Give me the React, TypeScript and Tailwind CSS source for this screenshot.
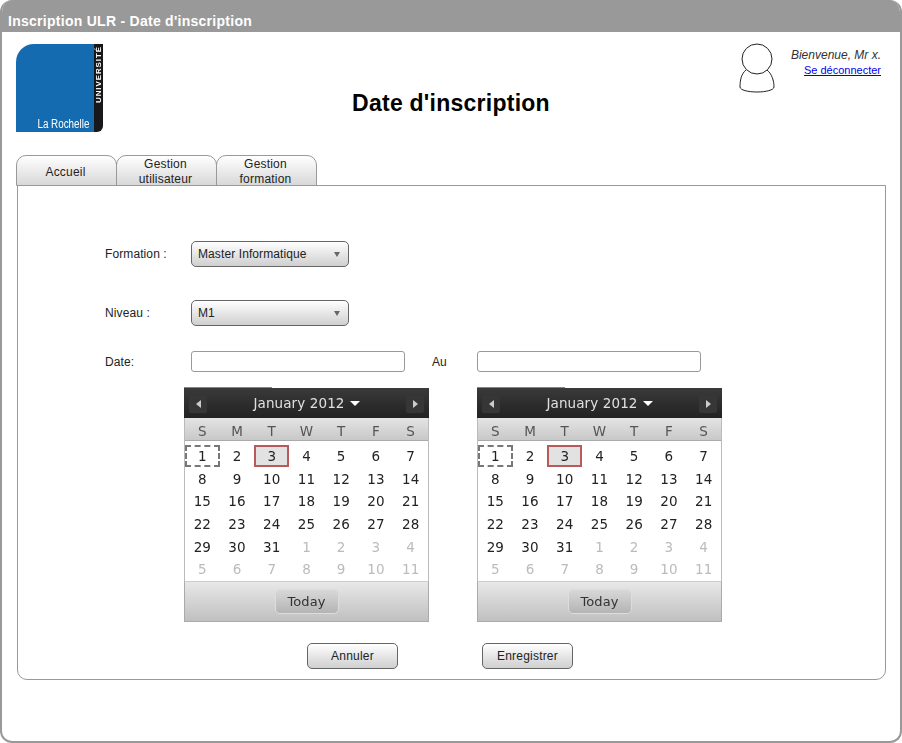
import { ReactNode } from 'react';

const weeks = [
  [1, 2, 3, 4, 5, 6, 7],
  [8, 9, 10, 11, 12, 13, 14],
  [15, 16, 17, 18, 19, 20, 21],
  [22, 23, 24, 25, 26, 27, 28],
  [29, 30, 31, 1, 2, 3, 4],
  [5, 6, 7, 8, 9, 10, 11],
];

function Tab({ children, wrap }: { children: ReactNode; wrap?: boolean }) {
  return (
    <div
      className={`w-[101px] -mr-px h-[31px] border border-[#999] rounded-t-[10px] bg-gradient-to-b from-white to-[#d8d8d8] flex justify-center text-center text-[12px] tracking-[0.2px] text-[#222] ${
        wrap ? 'leading-[15px] pt-px pr-[2px]' : 'items-center pt-[2px] pr-[2px]'
      }`}
    >
      <span>{children}</span>
    </div>
  );
}

function Select({ value }: { value: string }) {
  return (
    <div className="w-[158px] h-[26px] border border-[#666] rounded-[5px] bg-gradient-to-b from-white to-[#cfcfcf] flex items-center justify-between pl-[6px] pr-[8px] text-[12px] tracking-[0.1px] text-[#222]">
      <span>{value}</span>
      <span className="w-0 h-0 border-x-[3px] border-x-transparent border-t-[5px] border-t-[#666]" />
    </div>
  );
}

function Calendar() {
  return (
    <div className="w-[245px] blur-[0.35px] font-['DejaVu_Sans',sans-serif]">
      <div className="h-px w-[88px] bg-[#5b8fb5]" />
      <div className="h-[30px] bg-gradient-to-b from-[#3a3a3a] to-[#222] flex items-center justify-between px-[5px] pt-[1px] text-[#e0e0e0] text-[13.5px]">
        <span className="w-[18px] h-[18px] rounded-[2px] bg-[#363636] flex items-center justify-center">
          <span className="w-0 h-0 border-y-[4px] border-y-transparent border-r-[5px] border-r-[#ccc]" />
        </span>
        <span className="flex items-center gap-[5px]">
          January 2012
          <span className="w-0 h-0 border-x-[5px] border-x-transparent border-t-[5px] border-t-white" />
        </span>
        <span className="w-[18px] h-[18px] rounded-[2px] bg-[#363636] flex items-center justify-center">
          <span className="w-0 h-0 border-y-[4px] border-y-transparent border-l-[5px] border-l-[#ccc]" />
        </span>
      </div>
      <div className="border-x border-[#bbb]">
        <div className="h-[23px] pt-[3px] grid grid-cols-7 items-center text-center text-[13.5px] text-[#555] bg-gradient-to-b from-[#e4e4e4] to-[#c8c8c8] border-b border-[#aaa]">
          {['S', 'M', 'T', 'W', 'T', 'F', 'S'].map((d, i) => (
            <span key={i}>{d}</span>
          ))}
        </div>
        <div className="h-[140px] pt-[4px] bg-white text-[13.5px]">
          {weeks.map((week, w) => (
            <div key={w} className="grid grid-cols-7 h-[22.6px] items-center text-center">
              {week.map((day, i) => {
                const muted = (w === 4 && i > 2) || w === 5;
                return (
                  <span key={i} className="flex justify-center">
                    <span
                      className={`w-[35px] h-[22px] flex items-center justify-center ${
                        muted ? 'text-[#bbb]' : 'text-[#222]'
                      } ${w === 0 && i === 0 ? 'border-2 border-dashed border-[#777]' : ''} ${
                        w === 0 && i === 2 ? 'border-2 border-[#b85a5a] bg-[#e2e2e2]' : ''
                      }`}
                    >
                      {day}
                    </span>
                  </span>
                );
              })}
            </div>
          ))}
        </div>
      </div>
      <div className="h-[41px] border border-[#aaa] border-t-[#ccc] bg-gradient-to-b from-[#e8e8e8] to-[#c0c0c0] flex items-center justify-center">
        <div className="w-[64px] h-[25px] rounded-[5px] border border-[#ddd] bg-gradient-to-b from-[#d8d8d8] to-[#b4b4b4] flex items-center justify-center text-[13px] text-[#333]">
          Today
        </div>
      </div>
    </div>
  );
}

function Button({ children }: { children: ReactNode }) {
  return (
    <div className="w-[91px] h-[26px] border border-[#666] rounded-[5px] bg-gradient-to-b from-white to-[#cfcfcf] flex items-center justify-center text-[12px] tracking-[0.2px] text-[#222]">
      {children}
    </div>
  );
}

export default function App() {
  return (
    <div className="h-[743px] bg-white border-2 border-t-0 border-[#999] rounded-[12px] overflow-hidden font-['Liberation_Sans',Arial,sans-serif]">
      <div className="h-[32px] -mx-[2px] bg-[#999] flex items-center pl-[8px] pt-[9px] text-[14px] tracking-[0.27px] font-bold text-white leading-none">
        Inscription ULR - Date d'inscription
      </div>

      <div className="grid grid-cols-[1fr_auto_1fr] h-[123px] pl-[14px] pr-[19px] pt-[12px]">
        <div className="w-[87px] h-[88px] flex rounded-tl-[18px] rounded-br-[6px] overflow-hidden">
          <div className="w-[78px] bg-[#156bb0] flex items-end justify-end pr-[5px] pb-px">
            <span className="inline-block origin-right scale-x-[0.82] whitespace-nowrap text-[12px] leading-[14px] text-white">
              La Rochelle
            </span>
          </div>
          <div className="flex-1 bg-[#18181b] flex justify-center items-start pt-[2px]">
            <span className="[writing-mode:vertical-rl] rotate-180 text-[8px] tracking-[0.9px] leading-[9px] font-bold text-white">
              UNIVERSITÉ
            </span>
          </div>
        </div>
        <h1 className="pt-[46px] pl-[5px] text-[23px] tracking-[0.25px] leading-[26px] font-bold text-black">Date d'inscription</h1>
        <div className="flex justify-end">
          <svg width="38" height="50" viewBox="0 0 38 50" fill="none" stroke="#222" strokeWidth="1" className="mr-[15px] -mt-px">
            <circle cx="19" cy="16" r="15" />
            <path d="M8 27 C3 31 2 38 2 44 C2 47 10 49 19 49 C28 49 36 47 36 44 C36 38 34 31 29 27" />
          </svg>
          <div className="text-right pt-[4px]">
            <div className="text-[12px] leading-[14px] italic text-[#333]">Bienvenue, Mr x.</div>
            <a className="block text-[11px] leading-[14px] mt-[1px] text-[#0000ee] underline">Se déconnecter</a>
          </div>
        </div>
      </div>

      <div className="flex pl-[14px] relative z-10 -mb-px">
        <Tab>Accueil</Tab>
        <Tab wrap>
          Gestion
          <br />
          utilisateur
        </Tab>
        <Tab wrap>
          Gestion
          <br />
          formation
        </Tab>
      </div>

      <div className="ml-[15px] w-[869px] h-[495px] border border-[#999] rounded-b-[10px] text-[12px] tracking-[0.1px] text-[#222]">
        <div className="pt-[55px] pl-[87px]">
          <div className="flex items-center">
            <span className="w-[86px] -mt-px">Formation :</span>
            <Select value="Master Informatique" />
          </div>
          <div className="flex items-center mt-[33px]">
            <span className="w-[86px] -mt-px">Niveau :</span>
            <Select value="M1" />
          </div>
          <div className="flex items-center mt-[25px]">
            <span className="w-[86px]">Date:</span>
            <div className="w-[214px] h-[21px] border border-[#999] rounded-[3px] bg-white" />
            <span className="w-[72px] pl-[27px]">Au</span>
            <div className="w-[224px] h-[21px] border border-[#999] rounded-[3px] bg-white" />
          </div>
        </div>
        <div className="flex gap-[48px] ml-[166px] mt-[15px]">
          <Calendar />
          <Calendar />
        </div>
        <div className="flex gap-[84px] ml-[289px] mt-[21px]">
          <Button>Annuler</Button>
          <Button>Enregistrer</Button>
        </div>
      </div>
    </div>
  );
}
